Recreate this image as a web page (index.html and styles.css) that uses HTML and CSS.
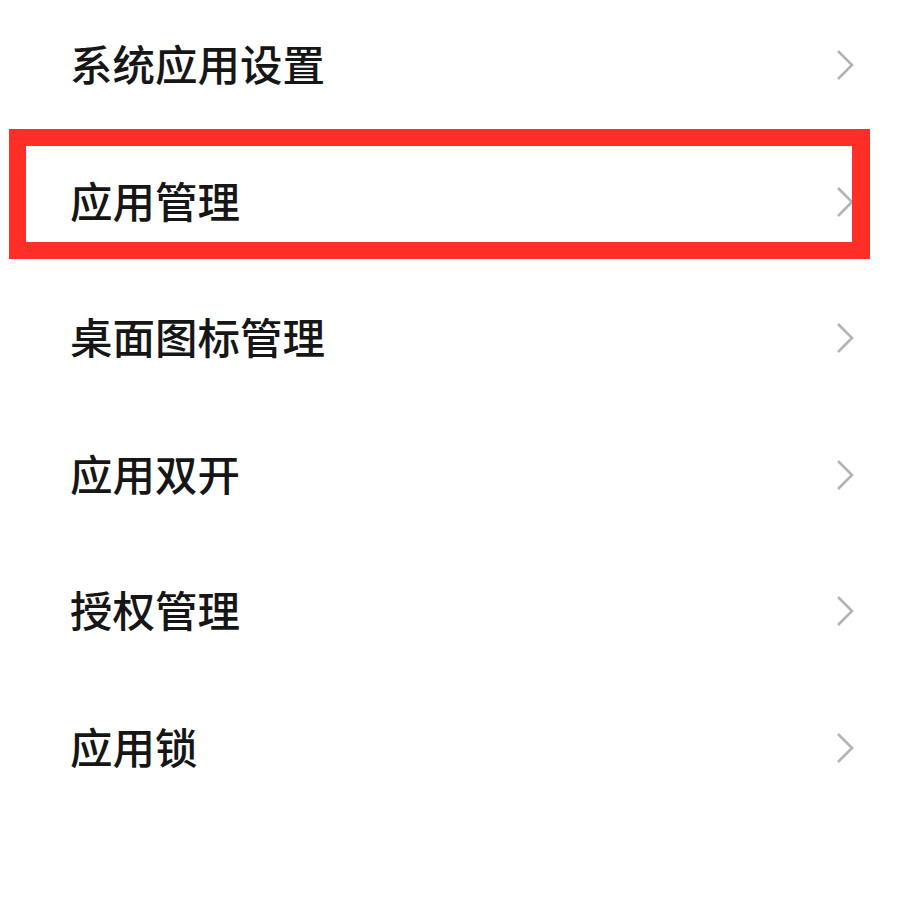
FILE: index.html
```html
<!DOCTYPE html>
<html lang="zh-CN">
<head>
<meta charset="utf-8">
<link rel="stylesheet" href="styles.css">
</head>
<body>
<div class="screen">
  <ul class="menu">
    <li class="row"><span class="label">系统应用设置</span><svg class="chev" viewBox="0 0 18 32"><path d="M2 2 L16 16 L2 30"/></svg></li>
    <li class="row"><span class="label">应用管理</span><svg class="chev" viewBox="0 0 18 32"><path d="M2 2 L16 16 L2 30"/></svg></li>
    <li class="row"><span class="label">桌面图标管理</span><svg class="chev" viewBox="0 0 18 32"><path d="M2 2 L16 16 L2 30"/></svg></li>
    <li class="row"><span class="label">应用双开</span><svg class="chev" viewBox="0 0 18 32"><path d="M2 2 L16 16 L2 30"/></svg></li>
    <li class="row"><span class="label">授权管理</span><svg class="chev" viewBox="0 0 18 32"><path d="M2 2 L16 16 L2 30"/></svg></li>
    <li class="row"><span class="label">应用锁</span><svg class="chev" viewBox="0 0 18 32"><path d="M2 2 L16 16 L2 30"/></svg></li>
  </ul>
  <div class="highlight"></div>
</div>
</body>
</html>
```
FILE: styles.css
```css
html, body {
  margin: 0;
  padding: 0;
  background: #ffffff;
}
.screen {
  position: relative;
  width: 923px;
  height: 923px;
  overflow: hidden;
  font-family: "Noto Sans CJK SC", "Noto Sans", sans-serif;
}
.menu {
  list-style: none;
  margin: -5px 0 0 0;
  padding: 0;
}
.row {
  height: 136.5px;
  display: flex;
  align-items: center;
  justify-content: space-between;
  padding: 0 69px 0 70px;
}
.label {
  font-size: 42.5px;
  font-weight: 500;
  color: #161616;
  letter-spacing: 0;
  line-height: 1;
}
.chev {
  width: 18px;
  height: 32px;
  margin-top: 4px;
  fill: none;
  stroke: #b4b4b4;
  stroke-width: 2.6;
}
.highlight {
  position: absolute;
  left: 9px;
  top: 129px;
  width: 826px;
  height: 96px;
  border: 17px solid #ff2f28;
  border-right-width: 18px;
}
```
